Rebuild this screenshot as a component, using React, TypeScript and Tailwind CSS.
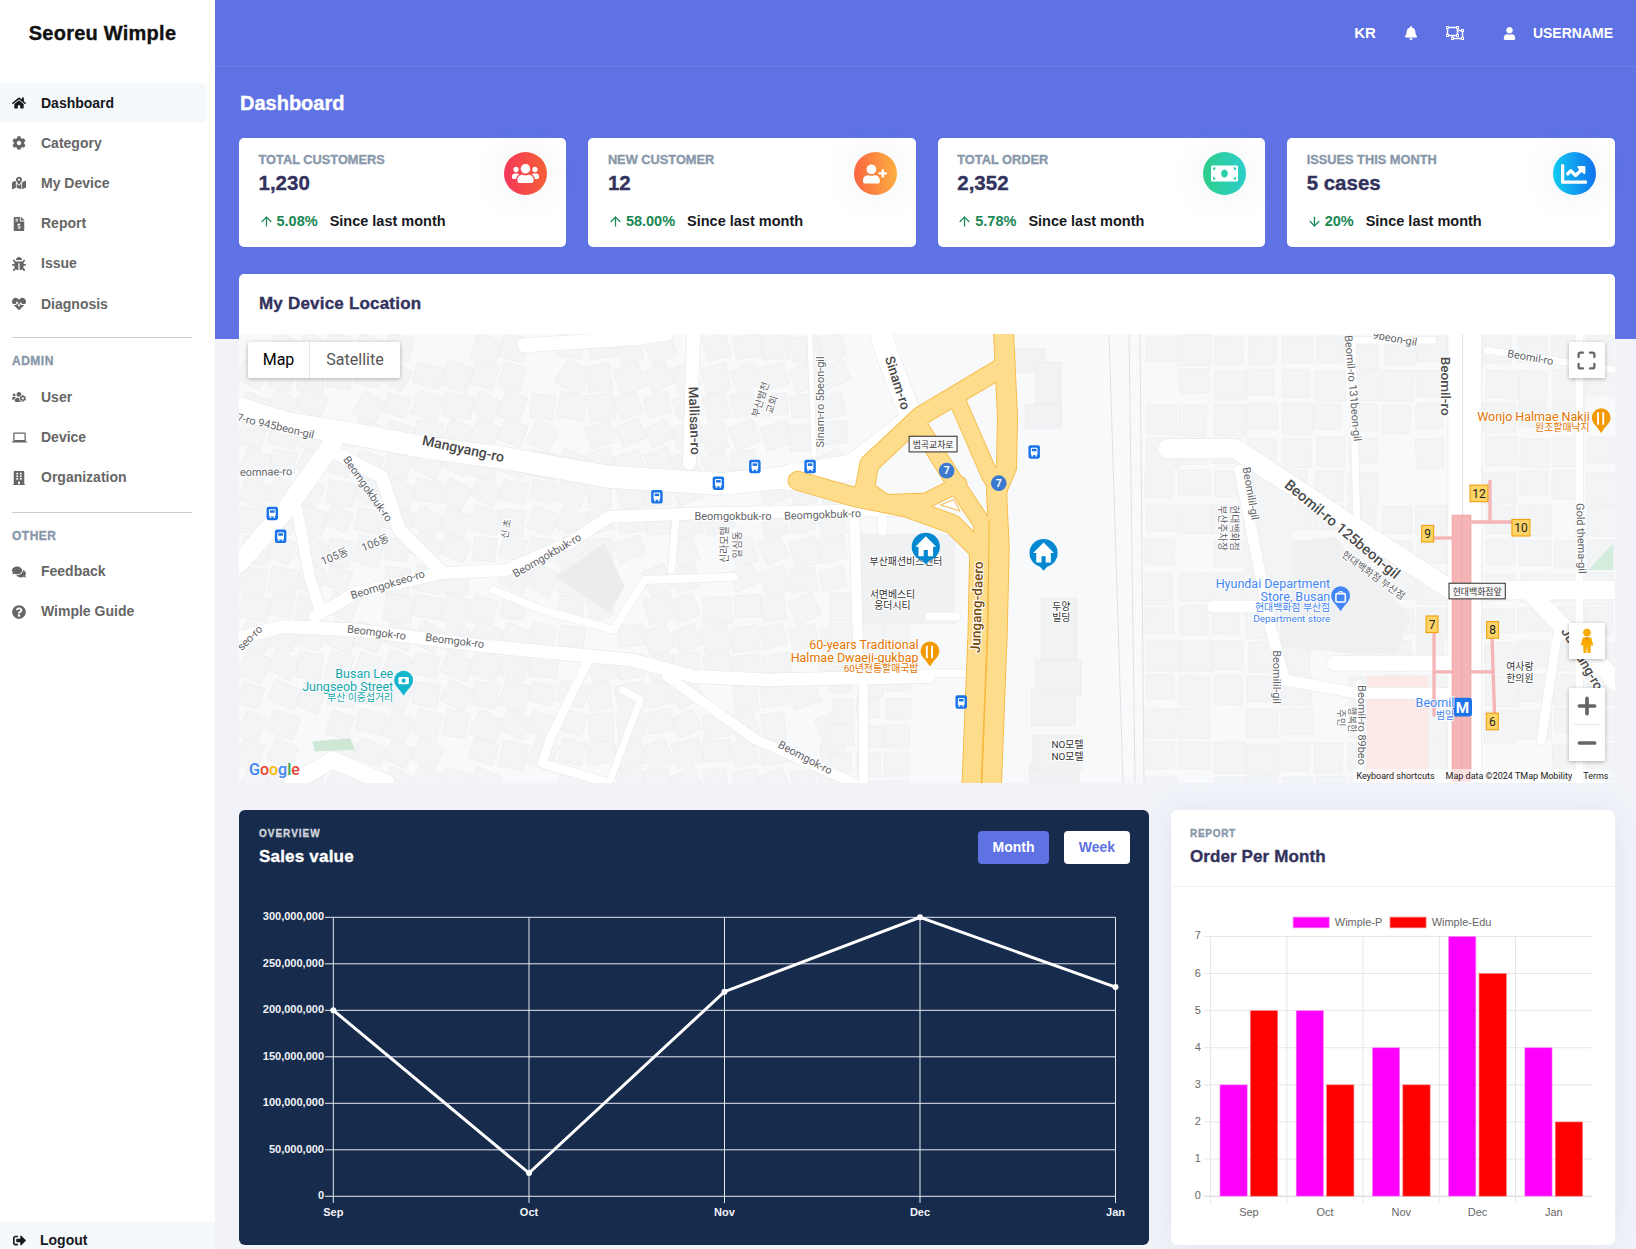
import type { ReactNode } from 'react';
import {
  FaBell, FaBug, FaBuilding, FaChartLine, FaCog, FaComments, FaFileInvoiceDollar, FaHeartbeat, FaHome,
  FaMapMarkedAlt, FaMoneyBill, FaQuestionCircle, FaRegObjectUngroup, FaSignOutAlt, FaUser,
  FaUserPlus, FaUsers, FaUsersCog,
} from 'react-icons/fa';
import { FiArrowDown, FiArrowUp, FiMaximize, FiMinus, FiPlus } from 'react-icons/fi';
import { MdLaptop } from 'react-icons/md';

// zoomed reference crops were not square, so map data is noted in crop units and converted here
const z5 = (pts: number[][]) => pts.map(([x, y]) => `${230 + x / 2.24},${330 + y / 3}`).join(' ');
const z6 = (pts: number[][]) => pts.map(([x, y]) => `${930 + x / 2.22},${330 + y / 3}`).join(' ');
const z10 = (pts: number[][]) => pts.map(([x, y]) => `${770 + x / 3},${334 + y / 3}`).join(' ');

const ROADS: [string, number][] = [
  [z5([[0, 225], [130, 280], [250, 305], [430, 350], [620, 385], [850, 440], [1100, 462], [1260, 440]]), 22],
  [z5([[20, 700], [130, 530], [230, 340]]), 19],
  [z5([[240, 370], [340, 440], [380, 600], [470, 720]]), 13],
  [z5([[190, 860], [280, 790], [470, 730], [620, 720], [760, 640], [850, 560], [1050, 550], [1500, 540]]), 12],
  [z5([[0, 930], [120, 890], [280, 900], [580, 950], [900, 990], [1040, 1040], [1200, 1050], [1568, 1040]]), 13],
  [z5([[590, 780], [700, 840], [860, 900], [930, 750], [1130, 740]]), 8],
  [z5([[150, 540], [180, 750], [200, 830]]), 11],
  [z5([[980, 1040], [1180, 1230], [1400, 1360]]), 10],
  [z5([[660, 45], [900, 25], [980, 10]]), 14],
  [z5([[1040, 5], [1030, 400]]), 13],
  [z5([[800, 1000], [720, 1220], [700, 1300], [850, 1360]]), 9],
  [z5([[880, 1080], [920, 1110], [850, 1360]]), 7],
  [z5([[140, 1360], [230, 1290], [350, 1360]]), 17],
  [z5([[1400, 550], [1410, 1040]]), 10],
  [z5([[1420, 1040], [1420, 1360]]), 9],
  [z5([[1000, 560], [990, 720]]), 7],
  [z5([[1300, 5], [1310, 380]]), 5],
  [z10([[60, 430], [250, 400], [430, 260]]), 26],
  [z10([[430, 260], [350, 50], [330, -20]]), 22],
  [z10([[340, 560], [340, 590]]), 10],
  [z6([[530, 355], [680, 355], [1000, 640], [1160, 780], [1520, 780]]), 19],
  [z6([[1190, 5], [1190, 1360]]), 33],
  [z6([[630, 830], [760, 830]]), 12],
  [z6([[900, 1000], [1160, 1000]]), 15],
  [z6([[690, 420], [760, 900], [790, 1050], [950, 1090], [1160, 1090]]), 11],
  [z6([[1445, 5], [1445, 1360]]), 8],
  [z6([[940, 30], [950, 560]]), 7],
  [z6([[1330, 780], [1530, 1060]]), 18],
  [z6([[1400, 880], [1360, 1230]]), 9],
  [z6([[1240, 60], [1530, 120]]), 7],
  [z6([[955, 1060], [960, 1360]]), 7],
  [z6([[950, 30], [1120, 30]]), 7],
  [z6([[60, 860], [0, 860]]), 8],
  [z6([[0, 1030], [80, 1030]]), 8],
];

// scattered house blocks, fixed seed so the picture doesn't change between runs
function makeBuildings() {
  let seed = 42;
  const rnd = () => {
    seed = (seed * 16807) % 2147483647;
    return seed / 2147483647;
  };
  const out: { x: number; y: number; w: number; h: number; r: number }[] = [];
  const regions = [
    [239, 334, 830, 783, 29, 12],
    [830, 590, 905, 783, 27, 0],
    [1145, 334, 1616, 783, 34, 0],
  ];
  for (const [x0, y0, x1, y1, step, tilt] of regions) {
    for (let y = y0; y < y1; y += step) {
      for (let x = x0; x < x1; x += step) {
        if (rnd() < 0.08) continue;
        out.push({
          x: x + rnd() * 3,
          y: y + rnd() * 3,
          w: step * (0.78 + rnd() * 0.2),
          h: step * (0.7 + rnd() * 0.25),
          r: tilt ? (rnd() - 0.5) * 2 * tilt + (x < 560 ? 18 : -14) : (rnd() - 0.5) * 3,
        });
      }
    }
  }
  return out;
}
const BUILDINGS = makeBuildings();

const SOLID_BLOCKS = [
  [1012, 348, 34, 24], [1036, 362, 26, 62], [1026, 404, 36, 24], [1042, 598, 36, 68], [1036, 660, 46, 36],
  [1032, 690, 44, 36], [1040, 770, 40, 13], [1030, 764, 46, 19], [1033, 736, 50, 34],
];

type Lbl = [string, number, number, number, number, string?, number?];
// text, x, y, rotation, size, colour, weight (coordinates in the 1568-wide overview)
const LABELS: Lbl[] = [
  ['Mangyang-ro', 444, 431, 12, 13.5, '#4a4a4a', 500],
  ['7-ro 945beon-gil', 264, 409, 13, 10.5],
  ['eomnae-ro', 255, 453, -1, 10.5],
  ['Beomgokbuk-ro', 352, 469, 55, 10.5],
  ['105동', 321, 534, -22, 10.5],
  ['106동', 360, 521, -22, 10.5],
  ['Beomgokseo-ro', 372, 561, -17, 10.5],
  ['seo-ro', 240, 612, -45, 10.5],
  ['Beomgok-ro', 361, 607, 7, 10.5],
  ['Beomgok-ro', 436, 615, 7, 10.5],
  ['Beomgokbuk-ro', 525, 533, -30, 10.5],
  ['Beomgokbuk-ro', 703, 496, 0, 10.5],
  ['Beomgokbuk-ro', 789, 494, -2, 10.5],
  ['Beomgok-ro', 772, 727, 28, 10.5],
  ['Mallisan-ro', 665, 403, 88, 13, '#4a4a4a', 500],
  ['Sinam-ro 5beon-gil', 788, 385, -90, 10.5],
  ['Sinam-ro', 860, 367, 72, 13, '#4a4a4a', 500],
  ['Jungang-daero', 938, 582, -88, 13, '#7a4b06', 500],
  ['Beomil-ro', 1386, 370, 90, 13, '#4a4a4a', 500],
  ['Beomil-ro 131beon-gil', 1297, 372, 85, 10.5],
  ['Beomil-ro', 1468, 343, 10, 10.5],
  ['9beon-gil', 1338, 325, 10, 10.5],
  ['Beomil-ro 125beon-gil', 1287, 508, 40, 14, '#4a4a4a', 500],
  ['Beomilil-gil', 1199, 473, 80, 10.5],
  ['Beomilil-gil', 1224, 649, 90, 10.5],
  ['Beomil-ro 89beo', 1305, 695, 90, 10.5],
  ['Gold thema-gil', 1516, 516, 88, 10.5],
  ['Jungang-ro', 1517, 632, 60, 13, '#4a4a4a', 500],
  ['부산패션비즈센터', 869, 539, 0, 9.5, '#333'],
  ['서면베스티', 856, 571, 0, 9.5, '#333'],
  ['웅더시티', 856, 581, 0, 9.5, '#333'],
  ['두양', 1018, 582, 0, 9.5, '#333'],
  ['빌딩', 1018, 593, 0, 9.5, '#333'],
  ['NO모텔', 1024, 715, 0, 9.5, '#333'],
  ['NO모텔', 1024, 726, 0, 9.5, '#333'],
  ['여사랑', 1458, 640, 0, 9.5, '#333'],
  ['한의원', 1458, 651, 0, 9.5, '#333'],
  ['현대백화점 부산점', 1317, 552, 36, 9.5],
  ['부산범천', 730, 383, -72, 9.5],
  ['교회', 741, 388, -72, 9.5],
  ['신라모텔', 696, 522, -90, 9.5],
  ['일심동', 708, 522, -90, 9.5],
  ['현대백화점', 1183, 506, 90, 9.5],
  ['부산주차장', 1172, 506, 90, 9.5],
  ['신 초', 486, 507, -80, 9],
  ['행복한', 1296, 690, 90, 9],
  ['주민', 1286, 688, 90, 9],
];

type Poi = [string, number, number, number, string];
const POIS: Poi[] = [
  ['60-years Traditional', 881, 622, 12, '#e37400'],
  ['Halmae Dwaeji-gukbap', 881, 634.5, 12, '#e37400'],
  ['60년전통할매국밥', 881, 644, 9.5, '#e37400'],
  ['Wonjo Halmae Nakji', 1525, 403, 12, '#e37400'],
  ['원조할매낙지', 1525, 413, 9.5, '#e37400'],
  ['Busan Lee', 377, 650, 12, '#12a5ae'],
  ['Jungseob Street', 377, 662.5, 12, '#12a5ae'],
  ['부산 이중섭거리', 377, 672, 9.5, '#12a5ae'],
  ['Hyundai Department', 1276, 564, 12, '#4285f4'],
  ['Store, Busan', 1276, 576, 12, '#4285f4'],
  ['현대백화점 부산점', 1276, 586, 9.5, '#4285f4'],
  ['Department store', 1276, 596, 9.5, '#4285f4'],
  ['Beomil', 1395, 678, 12, '#4285f4'],
  ['범일', 1395, 689, 9.5, '#4285f4'],
];

const BUS_STOPS = [
  [724, 447], [777, 447], [689, 463], [630, 476], [261, 492], [269, 514], [992, 433], [922, 673],
];

function BusStop({ x, y }: { x: number; y: number }) {
  return (
    <g transform={`translate(${x} ${y})`}>
      <rect x={-5.5} y={-6.5} width={11} height={13} rx={2} fill="#1a73e8" />
      <rect x={-3.2} y={-4} width={6.4} height={7} rx={1} fill="#fff" />
      <rect x={-2.2} y={-3} width={4.4} height={2.4} fill="#1a73e8" />
      <rect x={-2.6} y={3} width={1.5} height={1.4} fill="#fff" />
      <rect x={1.1} y={3} width={1.5} height={1.4} fill="#fff" />
    </g>
  );
}

function HomePin({ x, y }: { x: number; y: number }) {
  return (
    <g transform={`translate(${x} ${y})`}>
      <circle r={13.5} fill="#0288d1" />
      <path d="M-7 9 H7 L0 17 Z" fill="#0288d1" />
      <path d="M0 -10 L-10 0 H-7 V9 H-2 V3 H2 V9 H7 V0 H10 Z" fill="#fff" />
    </g>
  );
}

function PoiPin({ x, y, color, children }: { x: number; y: number; color: string; children: ReactNode }) {
  return (
    <g transform={`translate(${x} ${y})`}>
      <path d="M0 13 C-3 7 -9 4 -9 -2 A9 9 0 1 1 9 -2 C9 4 3 7 0 13 Z" fill={color} />
      {children}
    </g>
  );
}

function MapLayer() {
  return (
    <svg viewBox="239 334 1377 449" className="block h-[449px] w-full font-['Roboto','Noto_Sans_CJK_KR',sans-serif]">
      <rect x={239} y={334} width={1377} height={449} fill="#f8f9fb" />
      {BUILDINGS.map((b, i) => (
        <rect
          key={i}
          x={b.x}
          y={b.y}
          width={b.w}
          height={b.h}
          fill="#f3f4f5"
          stroke="#ebecee"
          strokeWidth={0.6}
          transform={`rotate(${b.r} ${b.x + b.w / 2} ${b.y + b.h / 2})`}
        />
      ))}
      {/* clear the strip around the highway and rail corridor */}
      <rect x={1005} y={334} width={140} height={449} fill="#f8f9fb" />
      {SOLID_BLOCKS.map(([x, y, w, h], i) => (
        <rect key={i} x={x} y={y} width={w} height={h} fill="#f1f2f3" stroke="#e9eaec" strokeWidth={0.6} />
      ))}
      {/* big footprints */}
      <polygon points={z5([[730, 740], [840, 640], [885, 770], [850, 850]])} fill="#ececee" />
      <polygon points={z6([[780, 640], [900, 620], [1070, 860], [1040, 970], [930, 970], [780, 950]])} fill="#eff0f1" />
      <rect x={862} y={534} width={94} height={90} fill="#f0f1f2" />
      <rect x={1244} y={465} width={50} height={140} fill="#f3f4f5" />
      <rect x={1368} y={676} width={62} height={107} fill="#fde8e8" />
      <polygon points={z6([[1465, 720], [1520, 640], [1520, 720]])} fill="#d3ecdc" />
      <polygon points={z5([[185, 1235], [270, 1225], [280, 1260], [190, 1265]])} fill="#cfe8d5" />

      <g fill="none" strokeLinecap="round" strokeLinejoin="round">
        {ROADS.map(([p, w], i) => (
          <polyline key={i} points={p} stroke="#e8e9eb" strokeWidth={w + 1.2} />
        ))}
        {ROADS.map(([p, w], i) => (
          <polyline key={i} points={p} stroke="#fff" strokeWidth={w} />
        ))}
      </g>

      {/* rail lines */}
      <g stroke="#d9dadd" strokeWidth={0.8}>
        <line x1={1110} y1={334} x2={1124} y2={783} />
        <line x1={1130} y1={334} x2={1136} y2={783} />
        <line x1={1141} y1={334} x2={1145} y2={783} />
        <line x1={1464} y1={334} x2={1464} y2={515} />
      </g>

      {/* highway interchange, noted in 3x crop units */}
      <g transform="translate(770 334) scale(0.33333)" fill="none" strokeLinecap="round" strokeLinejoin="round">
        {[
          { stroke: '#f6b73c', extra: 5 },
          { stroke: '#fddc8c', extra: 0 },
        ].map(({ stroke, extra }) => (
          <g key={stroke} stroke={stroke}>
            <polyline points="703,-10 715,250 712,400 682,470 690,640 684,900 665,1400" strokeWidth={58 + extra} />
            <polyline points="85,440 260,490 410,520 550,570 630,650 625,900 605,1400" strokeWidth={55 + extra} />
            <polyline points="690,105 455,245 300,390 285,470" strokeWidth={55 + extra} />
            <polyline points="440,260 560,450 640,570 640,660" strokeWidth={50 + extra} />
            <polyline points="560,190 660,420 690,470" strokeWidth={48 + extra} />
            <polyline points="300,470 350,505 470,500 570,450" strokeWidth={44 + extra} />
          </g>
        ))}
        <polyline points="660,560 656,900 636,1400" stroke="#f6b73c" strokeWidth={3} />
        <polygon points="515,512 553,497 572,530" fill="#fff" stroke="#f6b73c" strokeWidth={3} />
      </g>

      {/* subway corridor and exits, 3x crop units */}
      <g transform="translate(1300 470) scale(0.33333)">
        <rect x={460} y={135} width={57} height={800} fill="#f5b5b7" stroke="#eda0a2" strokeWidth={2} />
        <line x1={490} y1={135} x2={490} y2={935} stroke="#e9a3a5" strokeWidth={2} />
        <g stroke="#f5b5b7" strokeWidth={10} fill="none">
          <polyline points="517,156 650,156" />
          <polyline points="574,30 574,156" />
          <polyline points="400,204 460,204" />
          <polyline points="406,480 406,740" />
          <polyline points="406,606 460,606" />
          <polyline points="517,606 580,606" />
          <polyline points="580,500 588,740" />
        </g>
        {[
          ['12', 541, 70, 54], ['10', 667, 173, 54], ['9', 387, 191, 36], ['7', 400, 463, 36], ['8', 582, 480, 36], ['6', 581, 755, 36],
        ].map(([t, x, y, w]) => (
          <g key={t as string}>
            <rect x={(x as number) - (w as number) / 2} y={(y as number) - 25} width={w as number} height={50} fill="#fdd465" stroke="#f29900" strokeWidth={3} />
            <text x={x as number} y={(y as number) + 13} textAnchor="middle" fontSize={36} fill="#222">{t}</text>
          </g>
        ))}
        <rect x={463} y={684} width={57} height={56} rx={9} fill="#1a73e8" />
        <text x={491} y={730} textAnchor="middle" fontSize={46} fontWeight={700} fill="#fff">M</text>
      </g>

      <g transform="scale(1.0434)">
        {LABELS.map(([t, x, y, r, s, c, w], i) => (
          <text
            key={i}
            x={x}
            y={y}
            fontSize={s}
            fill={c ?? '#5f6368'}
            fontWeight={w ?? 400}
            textAnchor="middle"
            dominantBaseline="middle"
            transform={r ? `rotate(${r} ${x} ${y})` : undefined}
            stroke="#fff"
            strokeWidth={2}
            paintOrder="stroke"
          >
            {t}
          </text>
        ))}
        {POIS.map(([t, x, y, s, c], i) => (
          <text key={i} x={x} y={y} fontSize={s} fill={c} textAnchor="end" stroke="#fff" strokeWidth={1.5} paintOrder="stroke">
            {t}
          </text>
        ))}
        {BUS_STOPS.map(([x, y], i) => (
          <BusStop key={i} x={x} y={y} />
        ))}
        <HomePin x={888} y={524} />
        <HomePin x={1001} y={530} />
        <PoiPin x={892} y={626} color="#f29900">
          <path d="M-3 -7 V-1 M-3 -1 V5 M2 -7 V5" stroke="#fff" strokeWidth={1.8} />
        </PoiPin>
        <PoiPin x={1536} y={402} color="#f29900">
          <path d="M-3 -7 V-1 M-3 -1 V5 M2 -7 V5" stroke="#fff" strokeWidth={1.8} />
        </PoiPin>
        <PoiPin x={387} y={654} color="#12b5cb">
          <rect x={-5} y={-5} width={10} height={7} rx={1} fill="#fff" />
          <circle cy={-1.5} r={2} fill="#12b5cb" />
        </PoiPin>
        <PoiPin x={1286} y={573} color="#4285f4">
          <rect x={-4.5} y={-4} width={9} height={8} rx={1} fill="none" stroke="#fff" strokeWidth={1.5} />
          <path d="M-2 -4 A2 2 0 0 1 2 -4" fill="none" stroke="#fff" />
        </PoiPin>
        <g transform="translate(908 451)">
          <circle r={7.5} fill="#3b78d0" />
          <text y={3.5} textAnchor="middle" fontSize={10} fontWeight={700} fill="#fff">7</text>
        </g>
        <g transform="translate(958 463)">
          <circle r={7.5} fill="#3b78d0" />
          <text y={3.5} textAnchor="middle" fontSize={10} fontWeight={700} fill="#fff">7</text>
        </g>
        <g>
          <rect x={872} y={418} width={46} height={15} fill="#f8f8f8" stroke="#333" strokeWidth={1} />
          <text x={895} y={429} textAnchor="middle" fontSize={8.5} fill="#333">범곡교차로</text>
          <rect x={1390} y={559} width={54} height={15} fill="#f8f8f8" stroke="#333" strokeWidth={1} />
          <text x={1417} y={570} textAnchor="middle" fontSize={8.5} fill="#333">현대백화점앞</text>
        </g>
      </g>
    </svg>
  );
}

// google map widgets sitting on top of the tiles
function MapControls() {
  return (
    <>
      <div className="absolute left-[9px] top-[8px] flex h-9 rounded-[2px] bg-white font-['Roboto',sans-serif] text-[16px] shadow-[0_1px_4px_rgba(0,0,0,0.3)]">
        <span className="flex w-[62px] items-center justify-center border-r border-[#e6e6e6] text-black">Map</span>
        <span className="flex w-[90px] items-center justify-center text-[#565656]">Satellite</span>
      </div>
      <div className="absolute right-[10px] top-[8px] grid size-9 place-items-center bg-white text-[#666] shadow-[0_1px_4px_rgba(0,0,0,0.3)]">
        <FiMaximize size={21} strokeWidth={2.6} />
      </div>
      <div className="absolute right-[10px] top-[289px] grid size-9 place-items-center bg-white shadow-[0_1px_4px_rgba(0,0,0,0.3)]">
        <svg width="14" height="26" viewBox="0 0 20 36">
          <circle cx="10" cy="6" r="5.5" fill="#f9ab00" />
          <path d="M4 13 H16 L19 24 L15.5 24 L15 35 H11 L10 25 L9 35 H5 L4.5 24 L1 24 Z" fill="#f9ab00" />
          <path d="M7 13 L10 18 L13 13 Z" fill="#ea8600" />
        </svg>
      </div>
      <div className="absolute right-[10px] top-[354px] flex h-[73px] w-9 flex-col items-center bg-white text-[#666] shadow-[0_1px_4px_rgba(0,0,0,0.3)]">
        <div className="grid h-9 place-items-center"><FiPlus size={26} strokeWidth={3.4} /></div>
        <div className="h-px w-[27px] bg-[#e6e6e6]" />
        <div className="grid h-9 place-items-center"><FiMinus size={26} strokeWidth={3.4} /></div>
      </div>
      <div className="absolute bottom-[1px] left-[10px] font-['Roboto',sans-serif] text-[16px] leading-[24px] font-medium">
        <span className="text-[#4285f4]">G</span>
        <span className="text-[#ea4335]">o</span>
        <span className="text-[#fbbc05]">o</span>
        <span className="text-[#4285f4]">g</span>
        <span className="text-[#34a853]">l</span>
        <span className="text-[#ea4335]">e</span>
      </div>
      <div className="absolute bottom-0 right-[6px] flex gap-[11px] bg-white/60 pl-[3px] font-['Roboto',sans-serif] text-[9px] leading-[14px] text-[#222]">
        <span>Keyboard shortcuts</span>
        <span>Map data ©2024 TMap Mobility</span>
        <span>Terms</span>
      </div>
    </>
  );
}

const HEAVY = '[-webkit-text-stroke:0.35px_currentColor]';

const NAV_MAIN = [
  { label: 'Dashboard', icon: FaHome, active: true },
  { label: 'Category', icon: FaCog },
  { label: 'My Device', icon: FaMapMarkedAlt },
  { label: 'Report', icon: FaFileInvoiceDollar },
  { label: 'Issue', icon: FaBug },
  { label: 'Diagnosis', icon: FaHeartbeat },
];
const NAV_ADMIN = [
  { label: 'User', icon: FaUsersCog },
  { label: 'Device', icon: MdLaptop },
  { label: 'Organization', icon: FaBuilding },
];
const NAV_OTHER = [
  { label: 'Feedback', icon: FaComments },
  { label: 'Wimple Guide', icon: FaQuestionCircle },
];

type NavEntry = { label: string; icon: typeof FaHome; active?: boolean };

function NavItem({ item }: { item: NavEntry }) {
  const Icon = item.icon;
  return (
    <div
      className={`mr-2 flex h-[40.2px] items-center rounded-r-[6px] pl-3 text-[14px] font-bold ${
        item.active ? 'bg-[#f6f9fc] text-[#16181d]' : 'text-[#666]'
      }`}
    >
      <span className="flex w-[29px] shrink-0">
        <Icon size={item.icon === MdLaptop ? 15 : 14} />
      </span>
      {item.label}
    </div>
  );
}

function Sidebar() {
  return (
    <aside className="flex h-full w-[215px] shrink-0 flex-col overflow-hidden bg-white">
      <div className={`flex h-[83px] shrink-0 items-start justify-center pr-[10px] pt-[21px] text-[20px] font-bold leading-[24px] tracking-[0.25px] text-[#111] ${HEAVY}`}>
        Seoreu Wimple
      </div>
      {NAV_MAIN.map((n) => <NavItem key={n.label} item={n} />)}
      <div className="ml-3 mr-[23px] mt-[13px] h-px bg-[#cfcfcf]" />
      <div className={`ml-3 mt-[16px] text-[12px] font-bold leading-[14px] tracking-[0.5px] text-[#8898aa] ${HEAVY}`}>ADMIN</div>
      <div className="mt-[9px]">
        {NAV_ADMIN.map((n) => <NavItem key={n.label} item={n} />)}
      </div>
      <div className="ml-3 mr-[23px] mt-[14px] h-px bg-[#cfcfcf]" />
      <div className={`ml-3 mt-[16px] text-[12px] font-bold leading-[14px] tracking-[0.5px] text-[#8898aa] ${HEAVY}`}>OTHER</div>
      <div className="mt-[9px]">
        {NAV_OTHER.map((n) => <NavItem key={n.label} item={n} />)}
      </div>
      <div className="mt-auto flex h-[27px] shrink-0 items-start bg-[#f6f9fc] pl-[13px] pt-[9px] text-[14px] font-bold leading-[18px] text-[#16181d]">
        <span className="flex h-[18px] w-[27px] items-center"><FaSignOutAlt size={13} /></span>
        Logout
      </div>
    </aside>
  );
}

function TopBar() {
  return (
    <header className="flex h-[67px] shrink-0 items-center justify-end border-b border-white/10 pr-[23px] text-[14px] font-bold text-white">
      <span className="text-[15px]">KR</span>
      <FaBell size={14} className="ml-[28px]" />
      <FaRegObjectUngroup size={18} className="ml-[28px]" />
      <FaUser size={13} className="ml-[39px]" />
      <span className="ml-[17px]">USERNAME</span>
    </header>
  );
}

type Stat = {
  title: string;
  value: string;
  delta: string;
  down?: boolean;
  icon: typeof FaHome;
  gradient: string;
  iconSize: number;
};

const STATS: Stat[] = [
  { title: 'TOTAL CUSTOMERS', value: '1,230', delta: '5.08%', icon: FaUsers, gradient: 'bg-[linear-gradient(87deg,#f5365c,#f56036)]', iconSize: 27 },
  { title: 'NEW CUSTOMER', value: '12', delta: '58.00%', icon: FaUserPlus, gradient: 'bg-[linear-gradient(87deg,#fb6340,#fbb140)]', iconSize: 24 },
  { title: 'TOTAL ORDER', value: '2,352', delta: '5.78%', icon: FaMoneyBill, gradient: 'bg-[linear-gradient(87deg,#2dce89,#2dcecc)]', iconSize: 27 },
  { title: 'ISSUES THIS MONTH', value: '5 cases', delta: '20%', down: true, icon: FaChartLine, gradient: 'bg-[linear-gradient(87deg,#11cdef,#1171ef)]', iconSize: 26 },
];

function StatCard({ s }: { s: Stat }) {
  const Icon = s.icon;
  const Arrow = s.down ? FiArrowDown : FiArrowUp;
  return (
    <div className="relative h-[109px] rounded-[5px] bg-white px-[19.5px] pt-[14px]">
      <div className={`text-[12.8px] font-bold leading-[16px] text-[#8898aa] ${HEAVY}`}>{s.title}</div>
      <div className={`mt-[1px] text-[20.5px] font-bold leading-[28px] text-[#32325d] ${HEAVY}`}>{s.value}</div>
      <div className="mt-[14px] flex items-center text-[14.5px] font-bold leading-[20px]">
        <Arrow size={15} className="mr-[3px] text-[#198754]" />
        <span className="text-[#198754]">{s.delta}</span>
        <span className="ml-[12px] text-[#16181d]">Since last month</span>
      </div>
      <div className={`absolute right-[19px] top-[14px] grid size-[43px] place-items-center rounded-full text-white shadow-[0_0_32px_rgba(136,152,170,0.15)] ${s.gradient}`}>
        <Icon size={s.iconSize} />
      </div>
    </div>
  );
}

const LINE_X = [333.3, 529, 724.5, 920, 1115.5];
const LINE_VALUES = [200, 25, 220, 300, 225];
const lineY = (v: number) => 1196.3 - (v / 300) * 279;

function SalesChart() {
  const points = LINE_VALUES.map((v, i) => `${LINE_X[i]},${lineY(v)}`).join(' ');
  return (
    <svg viewBox="239 880 910 365" className="block h-[365px] w-full font-['Liberation_Sans',Arial,sans-serif]">
      {[0, 50, 100, 150, 200, 250, 300].map((v) => (
        <g key={v}>
          <line x1={325} x2={1115.5} y1={lineY(v)} y2={lineY(v)} stroke="#e8ebf0" strokeWidth={1} />
          <text x={324} y={lineY(v) + 3} textAnchor="end" fontSize={11} fontWeight={700} fill="#f2f4f7">
            {v === 0 ? '0' : `${v},000,000`}
          </text>
        </g>
      ))}
      {LINE_X.map((x, i) => (
        <g key={x}>
          <line x1={x} x2={x} y1={917.3} y2={1203} stroke="#e8ebf0" strokeWidth={1} />
          <text x={x} y={1216} textAnchor="middle" fontSize={11} fontWeight={700} fill="#f2f4f7">
            {['Sep', 'Oct', 'Nov', 'Dec', 'Jan'][i]}
          </text>
        </g>
      ))}
      <polyline points={points} fill="none" stroke="#fff" strokeWidth={3} />
      {LINE_VALUES.map((v, i) => (
        <circle key={i} cx={LINE_X[i]} cy={lineY(v)} r={3} fill="#fff" />
      ))}
    </svg>
  );
}

const BAR_DATA = [
  { m: 'Sep', p: 3, e: 5 },
  { m: 'Oct', p: 5, e: 3 },
  { m: 'Nov', p: 4, e: 3 },
  { m: 'Dec', p: 7, e: 6 },
  { m: 'Jan', p: 4, e: 2 },
];
const BAR_X0 = 1210.7;
const BAR_STEP = 76.3;
const barY = (v: number) => 1196.3 - v * 37.14;

function OrderChart() {
  return (
    <svg viewBox="1171 887 444 358" className="block h-[358px] w-full font-['Liberation_Sans',Arial,sans-serif]">
      <rect x={1293.3} y={917} width={36} height={10.6} fill="#f0f" stroke="#ff66ff" strokeWidth={0.8} />
      <text x={1335} y={926} fontSize={11} fill="#666">Wimple-P</text>
      <rect x={1390.3} y={917} width={36} height={10.6} fill="#f00" stroke="#ff6666" strokeWidth={0.8} />
      <text x={1432} y={926} fontSize={11} fill="#666">Wimple-Edu</text>
      {[0, 1, 2, 3, 4, 5, 6, 7].map((v) => (
        <g key={v}>
          <line x1={1204} x2={1592} y1={barY(v)} y2={barY(v)} stroke={v === 0 ? '#d0d0d0' : '#e6e6e6'} />
          <text x={1201} y={barY(v) + 3} textAnchor="end" fontSize={11} fill="#666">{v}</text>
        </g>
      ))}
      {[0, 1, 2, 3, 4].map((i) => (
        <line key={i} x1={BAR_X0 + i * BAR_STEP} x2={BAR_X0 + i * BAR_STEP} y1={936.3} y2={1203} stroke="#e6e6e6" />
      ))}
      {BAR_DATA.map((d, i) => {
        const left = 1220 + i * BAR_STEP;
        return (
          <g key={d.m}>
            <rect x={left} y={barY(d.p)} width={27.3} height={d.p * 37.14} fill="#f0f" stroke="#ff8cff" strokeWidth={0.6} />
            <rect x={left + 30.5} y={barY(d.e)} width={27.3} height={d.e * 37.14} fill="#f00" stroke="#ff7a7a" strokeWidth={0.6} />
            <text x={left + 29} y={1216} textAnchor="middle" fontSize={11} fill="#666">{d.m}</text>
          </g>
        );
      })}
    </svg>
  );
}

export default function App() {
  return (
    <div className="flex h-screen w-full overflow-hidden bg-[#f1f3f9] font-['Liberation_Sans',Arial,sans-serif]">
      <Sidebar />
      <main className="flex min-w-0 flex-1 flex-col bg-[linear-gradient(#5e72e4_339px,#f1f3f9_339px)]">
        <TopBar />
        <div className="pl-6 pr-[21.5px]">
          <h1 className={`flex h-[71px] items-center pl-px text-[20px] font-bold text-white ${HEAVY}`}>Dashboard</h1>
          <div className="grid grid-cols-4 gap-[22px]">
            {STATS.map((s) => <StatCard key={s.title} s={s} />)}
          </div>

          <section className="mt-[27px] overflow-hidden rounded-t-[5px] bg-white">
            <div className={`flex h-[60px] items-center px-5 text-[17px] font-bold tracking-[0.2px] text-[#32325d] ${HEAVY}`}>
              My Device Location
            </div>
            <div className="relative">
              <MapLayer />
              <MapControls />
            </div>
          </section>

          <div className="mt-[27px] flex h-[435px] gap-[22px]">
            <section className="w-[910px] overflow-hidden rounded-[6px] bg-[#172b4d]">
              <div className="flex h-[70px] items-start justify-between pl-5 pr-[19px] pt-[18px]">
                <div>
                  <div className={`text-[10px] font-bold leading-[12px] tracking-[1px] text-[#ced4da] ${HEAVY}`}>OVERVIEW</div>
                  <div className={`mt-[6px] text-[17px] font-bold leading-[22px] tracking-[0.2px] text-white ${HEAVY}`}>Sales value</div>
                </div>
                <div className="mt-[3px] flex gap-[15px] text-[14px] font-bold">
                  <button className="h-[33px] w-[71px] rounded-[4px] bg-[#5e72e4] text-white">Month</button>
                  <button className="h-[33px] w-[66px] rounded-[4px] bg-white text-[#5e72e4]">Week</button>
                </div>
              </div>
              <SalesChart />
            </section>
            <section className="flex-1 overflow-hidden rounded-[6px] bg-white shadow-[0_0_32px_rgba(136,152,170,0.15)]">
              <div className="h-[77px] border-b border-[#f0f1f4] px-[19px] pt-[18px]">
                <div className={`text-[10px] font-bold leading-[12px] tracking-[0.7px] text-[#8898aa] ${HEAVY}`}>REPORT</div>
                <div className={`mt-[6px] text-[17px] font-bold leading-[22px] tracking-[0.1px] text-[#32325d] ${HEAVY}`}>Order Per Month</div>
              </div>
              <OrderChart />
            </section>
          </div>
        </div>
      </main>
    </div>
  );
}
